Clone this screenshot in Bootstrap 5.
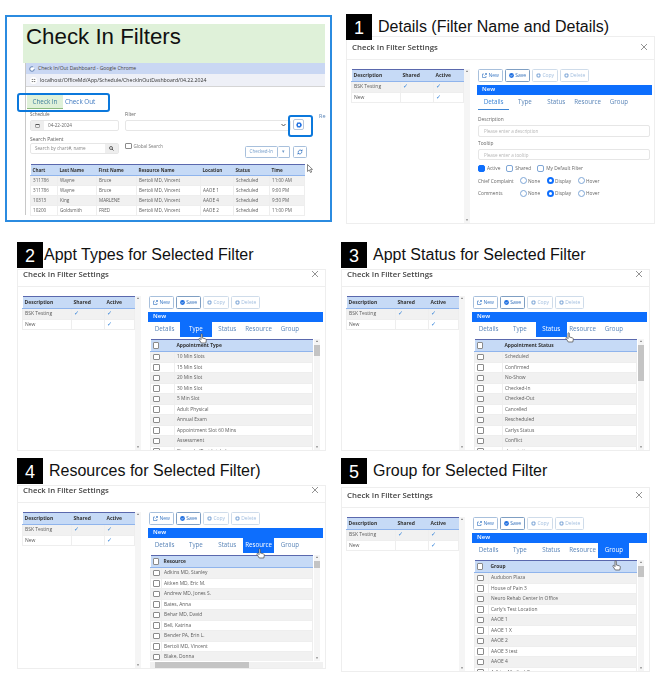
<!DOCTYPE html>
<html lang="en">
<head>
  <meta charset="UTF-8" />
  <meta name="viewport" content="width=device-width, initial-scale=1.0" />
  <title>Check In Filters</title>
  <link href="https://cdn.jsdelivr.net/npm/bootstrap@5.3.0/dist/css/bootstrap.min.css" rel="stylesheet" />
  <style>
    body { background: #fff; margin: 0; overflow: hidden; }
    .sheet { display: grid; grid-template-columns: 340px 315px; grid-template-rows: 236px 219px 234px; width: 655px; height: 689px; }
    .cell { display: flex; flex-direction: column; min-width: 0; min-height: 0; }
    .cell-a { padding: 15px 8px 14px 5px; }
    .cell-b { padding: 14px 0 0 6px; }
    .cell-c { padding: 6px 14px 0 17px; }
    .cell-d { padding: 6px 5px 0 1px; }
    .cell-e { padding: 3px 13px 0 17px; }
    .cell-f { padding: 3px 5px 0 1px; }

    .step-title { display: flex; align-items: center; gap: 6px; font-family: "Liberation Sans", Arial, sans-serif; font-size: 16px; line-height: 26px; color: #111; position: relative; z-index: 2; flex: none; }
    .step-title.tight { gap: 1px; }
    .step-num { width: 26px; height: 26px; background: #000; color: #fff; font-size: 18px; text-align: center; line-height: 28px; flex: none; }

    .shot { font-family: "Open Sans", sans-serif; background: #fff; border: 1px solid #eee; display: flex; flex-direction: column; overflow: hidden; position: relative; filter: blur(.4px); flex: none; }
    .shot-head { border-bottom: 1px solid #eee; display: flex; align-items: flex-end; justify-content: space-between; padding: 0 6px 7px 5px; font-size: 7.8px; line-height: 9px; font-weight: 600; color: #444; flex: none; }
    .shot-x { width: 8px; height: 8px; color: #777; flex: none; margin-bottom: 1px; }
    .shot-body { display: flex; flex: 1; min-height: 0; padding-top: 9px; }
    .left-pane { width: 119px; margin-left: 4px; display: flex; flex: none; }
    .left-pane .tiny-table { width: 112px; }
    .right-pane { width: 175px; margin-left: 7px; display: flex; flex-direction: column; min-height: 0; flex: none; }

    .tiny-table { table-layout: fixed; margin: 0; font-size: 5px; color: #5c5c5c; border-collapse: collapse; height: fit-content; }
    .tiny-table th, .tiny-table td { padding: 0 2px; height: 10.5px; line-height: 9.5px; border: 1px solid #eee; white-space: nowrap; overflow: hidden; background: #fff; box-shadow: none; vertical-align: middle; }
    .tiny-table thead th { height: 12px; background: #c6daf6; color: #333; font-weight: 700; border: 0; border-top: 1px solid #5a68ad; border-bottom: 1px solid #8fb4ec; }
    .tiny-table tbody tr:nth-child(odd) td { background: #f1f1f1; }
    .tiny-tick { color: #2f7fd8; font-size: 6px; line-height: 8px; }

    .side-bar { width: 6px; background: #f5f5f5; display: flex; flex-direction: column; justify-content: space-between; flex: none; position: relative; }
    .side-bar-arrow { font-size: 3px; line-height: 5px; color: #666; text-align: center; }
    .side-thumb { position: absolute; top: 6px; left: 0; width: 100%; background: #c4c4c4; }

    .tool-row { display: flex; gap: 2px; padding-left: 1px; flex: none; }
    .tool-btn { display: flex; align-items: center; justify-content: center; gap: 1.5px; height: 13px; padding: 0; font-size: 5px; color: #3a78c4; background: #fff; border: 1px solid #a8c0dc; border-radius: 1.5px; }
    .tool-btn svg { width: 5px; height: 5px; }
    .tool-btn.is-off { color: #a3bfdf; border-color: #cfdcea; }
    .tool-btn.is-save { border-color: #7f9fc3; color: #2e6cb8; }
    .pane-bar { background: #0d6efd; color: #fff; font-size: 6px; font-weight: 600; line-height: 9.5px; height: 9.5px; padding-left: 5px; margin-top: 3px; flex: none; }
    .tab-row { display: flex; flex-wrap: nowrap; padding-left: 1px; flex: none; height: 15px; }
    .tab-row .nav-link { width: 31.3px; height: 15px; padding: 0; text-align: center; font-size: 6.2px; line-height: 14px; color: #5a85b8; white-space: nowrap; flex: none; }
    .tab-row .nav-link.is-on { background: #0d6efd; color: #fff; }
    .tab-row .nav-link.is-line { color: #3d86d6; border-bottom: 1px solid #3d86d6; }
    .list-wrap { display: flex; flex: 1; min-height: 0; margin: 2.5px 3px 0 2px; gap: 1px; }
    .list-clip { flex: 1; overflow: hidden; min-width: 0; }
    .list-clip .tiny-table { width: 100%; font-size: 4.9px; }
    .tick-box { display: block; width: 6.5px; height: 6.5px; border: 1px solid #8b8b8b; border-radius: 1px; background: #fff; }
    .under-bar { height: 6px; background: #f1f1f1; margin: 1px 0 0 2px; flex: none; position: relative; }
    .under-thumb { position: absolute; left: 5px; top: 0; width: 94px; height: 100%; background: #c4c4c4; }
    .hand { position: absolute; width: 9px; height: 11px; z-index: 3; }

    .form-pane { padding: 6.5px 2px 0 1px; font-size: 4.8px; color: #666; }
    .form-pane label { display: block; line-height: 7px; }
    .thin-input { display: block; height: 11.5px; padding: 0 5px; font-size: 4.5px; line-height: 10px; border: 1px solid #e6e6e6; border-radius: 2px; color: #b5b5b5; margin-bottom: 3px; margin-top: 2px; }
    .tick-row { display: flex; align-items: center; gap: 2px; height: 12.5px; line-height: 10px; }
    .tick-row.first-row { margin-top: -1px; }
    .pick { width: 7px; height: 7px; border: 1px solid #7ea6d6; border-radius: 2px; flex: none; }
    .pick.round { border-radius: 50%; }
    .pick.filled { background: #0d6efd; border-color: #0d6efd; }
    .pick.round.filled { background: #fff; border: 2px solid #0d6efd; }
    .row-name { width: 40px; }
    .pick-opt { display: flex; align-items: center; gap: 1px; width: 25px; }
    .pick-opt.wide { width: 29px; }

    /* first panel, the dashboard shot */
    .dash { border: 2px solid #2b8be0; flex: 1; padding: 7px 5px 0 16px; position: relative; font-family: "Open Sans", sans-serif; overflow: hidden; }
    .dash-title { height: 39px; background: #dff1d9; font-family: "Liberation Sans", Arial, sans-serif; font-size: 22.3px; line-height: 26px; color: #111; padding-left: 3px; }
    .dash-inner { filter: blur(.4px); border-left: 1px solid #c8c8c8; margin-left: 2px; height: 152px; font-size: 5px; color: #5c5c5c; position: relative; }
    .chrome-top { display: flex; align-items: center; gap: 3px; height: 11px; background: #c9d7f3; line-height: 11px; padding-left: 3px; font-size: 5px; color: #444; }
    .chrome-url { display: flex; align-items: center; gap: 3px; height: 13px; background: #eef0f7; line-height: 13px; padding-left: 4px; font-size: 5.2px; color: #333; border-bottom: 1px solid #d5d5d5; }
    .dash-tabs { display: flex; margin-top: 8px; height: 13px; font-size: 6.3px; line-height: 13px; padding-left: 1px; }
    .dash-tabs .nav-link { padding: 0; color: #3d78c0; line-height: 13px; }
    .dash-tabs .is-green { width: 36px; text-align: center; background: #dff1d9; color: #3f7f9c; border-bottom: 1px solid #8dbb7f; }
    .dash-tabs .nav-link + .nav-link { margin-left: 2px; }
    .dash-grid { display: grid; grid-template-columns: 89px 166px 13px; gap: 0 6px; margin: 3px 0 0 4px; }
    .dash-grid label { line-height: 7px; font-size: 4.6px; }
    .dash-field { display: flex; height: 11px; border: 1px solid #e6e6e6; border-radius: 2px; line-height: 9px; font-size: 4.6px; color: #666; align-items: center; margin-top: 1px; }
    .dash-search { width: 89px; margin-top: 1px; }
    .dash-addon { width: 13px; height: 100%; background: #eee; display: flex; align-items: center; justify-content: center; flex: none; }
    .dash-addon svg { width: 5px; height: 5px; }
    .dash-pad { padding-left: 4px; }
    .dash-gear { display: flex; align-items: center; justify-content: center; width: 11px; height: 11px; border: 1px solid #b6c6dc; border-radius: 2px; margin: 8px 0 0 -4px; }
    .dash-gear svg { width: 6px; height: 6px; }
    .dash-line { display: flex; margin: 5px 0 0 4px; height: 27px; position: relative; }
    .dash-global { display: flex; align-items: flex-start; gap: 2px; margin: 7px 0 0 6px; color: #777; line-height: 7px; font-size: 4.6px; }
    .dash-actions { display: flex; gap: 3px; margin-left: auto; margin-right: 18px; margin-top: 10px; height: 12px; }
    .dash-btn { height: 12px; border: 1px solid #a8c0dc; border-radius: 1.5px; display: flex; align-items: center; justify-content: center; color: #6f99c8; font-size: 4.5px; }
    .dash-btn.is-wide { width: 14px; }
    .dash-table { margin: 1px 0 0 4px; width: 274px; font-size: 4.6px; }
    .dash-table thead th { height: 11.5px; }
    .dash-table td, .dash-table th { height: 10px; line-height: 8.5px; }
    .ring { position: absolute; border: 2.5px solid #0b78dc; border-radius: 3px; z-index: 3; }
    .ring-tabs { left: 10px; top: 76px; width: 93px; height: 19px; }
    .ring-gear { left: 281px; top: 98px; width: 25px; height: 22px; }
    .pointer { position: absolute; left: 300px; top: 147px; width: 6px; height: 9px; z-index: 3; }
    .dash-re { position: absolute; left: 312px; top: 96px; font-size: 5.5px; color: #5a85b8; line-height: 7px; }
  </style>
</head>
<body>

  <div class="sheet">
    <div class="cell cell-a">
      <div class="dash">
        <div class="dash-title">Check In Filters</div>
        <div class="dash-inner">
          <div class="chrome-top"><svg width="6" height="6" viewBox="0 0 10 10"><circle cx="5" cy="5" r="3.800" fill="#fff" stroke="#4a6fa5" stroke-width="1.400" stroke-dasharray="18 6"/></svg>Check In/Out Dashboard - Google Chrome</div>
          <div class="chrome-url"><svg width="7" height="7" viewBox="0 0 10 10"><circle cx="5" cy="5" r="5" fill="#fff"/><path d="M2.500 3.500h2M5.500 3.500h2M2.500 6.500h2M5.500 6.500h2" stroke="#444" stroke-width="1"/></svg>localhost/OfficeMd/App/Schedule/CheckInOutDashboard/04.22.2024</div>
          <div class="nav dash-tabs">
            <a class="nav-link is-green" href="#">Check In</a>
            <a class="nav-link" href="#">Check Out</a>
          </div>
          <div class="dash-grid">
            <div>
              <label>Schedule</label>
              <div class="dash-field">
                <span class="dash-addon"><svg viewBox="0 0 10 10"><path d="M1 2h8v7H1z" fill="#555"/><path d="M2 4h6v4H2z" fill="#eee"/></svg></span>
                <span class="dash-pad">04-22-2024</span>
              </div>
            </div>
            <div>
              <label>Filter</label>
              <div class="dash-field justify-content-end pe-1"><svg width="5" height="4" viewBox="0 0 10 8"><path d="M1 2l4 4 4-4" fill="none" stroke="#555" stroke-width="2"/></svg></div>
            </div>
            <div class="dash-gear" id="dashGear"></div>
          </div>
          <div class="dash-line">
            <div>
              <label class="d-block lh-sm">Search Patient</label>
              <div class="dash-field dash-search">
                <span class="dash-pad flex-fill text-black-50">Search by chart#, name</span>
                <span class="dash-addon"><svg viewBox="0 0 10 10"><circle cx="4" cy="4" r="3" fill="none" stroke="#444" stroke-width="1.600"/><path d="M6 6l3 3" stroke="#444" stroke-width="1.800"/></svg></span>
              </div>
            </div>
            <div class="dash-global"><span class="tick-box"></span>Global Search</div>
            <div class="dash-actions">
              <div class="d-flex">
                <span class="dash-btn px-1">Checked-In</span>
                <span class="dash-btn px-1 border-start-0">▾</span>
              </div>
              <span class="dash-btn is-wide" id="dashRefresh"></span>
            </div>
          </div>
          <table class="table tiny-table dash-table" id="dashTable"></table>
        </div>
        <div class="dash-re">Re</div>
        <div class="ring ring-tabs"></div>
        <div class="ring ring-gear"></div>
        <svg class="pointer" viewBox="0 0 6 9"><path d="M.5.5v7l1.800-1.600L3.500 8.500l1.200-.5-1.200-2.600H5.500z" fill="#fff" stroke="#555" stroke-width=".7"/></svg>
      </div>
    </div>
    <div class="cell cell-b" id="step1"></div>
    <div class="cell cell-c" id="step2"></div>
    <div class="cell cell-d" id="step3"></div>
    <div class="cell cell-e" id="step4"></div>
    <div class="cell cell-f" id="step5"></div>
  </div>

  <script src="https://cdn.jsdelivr.net/npm/bootstrap@5.3.0/dist/js/bootstrap.bundle.min.js"></script>
  <script>
    const gear = c => `<svg viewBox="0 0 10 10"><circle cx="5" cy="5" r="3" fill="none" stroke="${c}" stroke-width="2.200"/><circle cx="5" cy="5" r="4.400" fill="none" stroke="${c}" stroke-width="1.200" stroke-dasharray="1.600 1.200"/></svg>`;
    const icons = {
      New: c => `<svg viewBox="0 0 10 10"><path d="M4 2H1v7h7V6" fill="none" stroke="${c}" stroke-width="1.300"/><path d="M5 5l4-4M6 1h3v3" fill="none" stroke="${c}" stroke-width="1.300"/></svg>`,
      Save: c => `<svg viewBox="0 0 10 10"><circle cx="5" cy="5" r="4.800" fill="${c}"/><path d="M2.800 5l1.600 1.600 2.800-3" fill="none" stroke="#fff" stroke-width="1.300"/></svg>`,
      Copy: gear,
      Delete: gear
    };
    const buttons = [["New", 25, ""], ["Save", 25, "is-save"], ["Copy", 26, "is-off"], ["Delete", 29, "is-off"]];
    const tabs = ["Details", "Type", "Status", "Resource", "Group"];
    const tick = '<span class="tiny-tick">✓</span>';

    document.getElementById("dashGear").innerHTML = gear("#1f6fe0");
    document.getElementById("dashRefresh").innerHTML = `<svg width="6" height="6" viewBox="0 0 10 10"><path d="M2 6a3.500 3.500 0 0 1 6-3M8 4a3.500 3.500 0 0 1-6 3" fill="none" stroke="#3a78c4" stroke-width="1.500"/><path d="M9 .5v3H6M1 9.500v-3h3" fill="#3a78c4"/></svg>`;

    const dashCols = [27, 39, 40, 64, 33, 36, 35];
    const dashHead = ["Chart", "Last Name", "First Name", "Resource Name", "Location", "Status", "Time"];
    const dashRows = [
      ["311786", "Wayne", "Bruce", "Bertoli MD, Vincent", "", "Scheduled", "11:00 AM"],
      ["311786", "Wayne", "Bruce", "Bertoli MD, Vincent", "AAOE 1", "Scheduled", "9:00 PM"],
      ["10313", "King", "MARLENE", "Bertoli MD, Vincent", "AAOE 4", "Scheduled", "9:30 PM"],
      ["10200", "Goldsmith", "FRED", "Bertoli MD, Vincent", "AAOE 2", "Scheduled", "11:00 PM"]
    ];
    document.getElementById("dashTable").innerHTML =
      `<colgroup>${dashCols.map(w => `<col width="${w}">`).join("")}</colgroup>` +
      `<thead><tr>${dashHead.map(h => `<th>${h}</th>`).join("")}</tr></thead>` +
      `<tbody>${dashRows.map(r => `<tr>${r.map(v => `<td>${v}</td>`).join("")}</tr>`).join("")}</tbody>`;

    function listPane(p) {
      const rows = p.rows.map(r => `<tr><td><span class="tick-box"></span></td><td>${r}</td></tr>`).join("");
      const under = p.under ? '<div class="under-bar"><div class="under-thumb"></div></div>' : "";
      return `<div class="list-wrap">
          <div class="list-clip"><table class="table tiny-table">
            <colgroup><col width="${p.check}"><col></colgroup>
            <thead><tr><th><span class="tick-box"></span></th><th>${p.label}</th></tr></thead>
            <tbody>${rows}</tbody></table></div>
          <div class="side-bar"><div class="side-bar-arrow">▲</div><div class="side-thumb" style="height:${p.thumb}px"></div><div class="side-bar-arrow">▼</div></div>
        </div>${under}`;
    }

    function detailsPane() {
      const picks = () => ["None", "Display", "Hover"].map(o =>
        `<span class="pick-opt ${o === "Display" ? "wide" : ""}"><span class="pick round ${o === "Display" ? "filled" : ""}"></span>${o}</span>`).join("");
      return `<div class="form-pane">
          <label>Description</label>
          <span class="thin-input">Please enter a description</span>
          <label>Tooltip</label>
          <span class="thin-input">Please enter a tooltip</span>
          <div class="tick-row first-row"><span class="pick filled"></span>Active <span class="pick ms-1"></span>Shared <span class="pick ms-1"></span>My Default Filter</div>
          <div class="tick-row"><span class="row-name">Chief Complaint</span>${picks()}</div>
          <div class="tick-row"><span class="row-name">Comments</span>${picks()}</div>
        </div>`;
    }

    function renderStep(p) {
      const tools = buttons.map(([n, w, cls]) =>
        `<button type="button" class="btn tool-btn ${cls}" style="width:${w}px">${icons[n](cls === "is-off" ? "#8fb2dc" : n === "Save" ? "#1f6fe0" : "#3a78c4")}${n}</button>`).join("");
      const navs = tabs.map((t, i) =>
        `<a class="nav-link ${i === p.active ? (p.details ? "is-line" : "is-on") : ""}" href="#">${t}</a>`).join("");
      const hand = p.hand ? `<svg class="hand" style="left:${p.hand[0]}px;top:${p.hand[1]}px" viewBox="0 0 9 11"><path d="M3 1.500c0-1 1.300-1 1.300 0V5l3 .8c.8.300 1.200.8 1 1.700L7.800 10H3.300L1 6.500c-.5-.9.500-1.500 1.200-.8l.8.900z" fill="#fff" stroke="#444" stroke-width=".7"/></svg>` : "";
      document.getElementById(p.id).innerHTML = `
        <div class="step-title ${p.tight ? "tight" : ""}"><span class="step-num">${p.num}</span><span>${p.title}</span></div>
        <div class="shot" style="height:${p.height}px;width:309px;margin-top:${p.gap}px">
          <div class="shot-head" style="height:${p.head}px"><span>Check In Filter Settings</span>
            <svg class="shot-x" viewBox="0 0 8 8"><path d="M1 1l6 6M7 1L1 7" stroke="currentColor" stroke-width=".8"/></svg></div>
          <div class="shot-body">
            <div class="left-pane">
              <table class="table tiny-table">
                <colgroup><col width="49"><col width="33"><col width="30"></colgroup>
                <thead><tr><th>Description</th><th>Shared</th><th>Active</th></tr></thead>
                <tbody><tr><td>BSK Testing</td><td>${tick}</td><td>${tick}</td></tr>
                <tr><td>New</td><td></td><td>${tick}</td></tr></tbody>
              </table>
              <div class="side-bar"><div class="side-bar-arrow">▲</div><div class="side-bar-arrow">▼</div></div>
            </div>
            <div class="right-pane">
              <div class="tool-row">${tools}</div>
              <div class="pane-bar">New</div>
              <div class="nav tab-row">${navs}</div>
              ${p.details ? detailsPane() : listPane(p)}
            </div>
          </div>
          ${hand}
        </div>`;
    }

    const steps = [
      { id: "step1", num: 1, title: "Details (Filter Name and Details)", height: 188, gap: -4, head: 23, active: 0, details: true },
      { id: "step2", num: 2, title: "Appt Types for Selected Filter", tight: true, height: 182, gap: 1, head: 17, active: 1,
        label: "Appointment Type", check: 24, thumb: 11, hand: [180, 63],
        rows: ["10 Min Slots", "15 Min Slot", "20 Min Slot", "30 Min Slot", "5 Min Slot", "Adult Physical", "Annual Exam", "Appointment Slot 60 Mins", "Assessment", "Biopsy (w/Test Intake)"] },
      { id: "step3", num: 3, title: "Appt Status for Selected Filter", height: 182, gap: 1, head: 17, active: 2,
        label: "Appointment Status", check: 28, thumb: 36, hand: [223, 62],
        rows: ["Scheduled", "Confirmed", "No-Show", "Checked-In", "Checked-Out", "Cancelled", "Rescheduled", "Carlys Status", "Conflict", "description"] },
      { id: "step4", num: 4, title: "Resources for Selected Filter)", height: 184, gap: 1, head: 17, active: 3,
        label: "Resource", check: 11, thumb: 7, under: true, hand: [238, 62],
        rows: ["Adkins MD, Stanley", "Aitken MD, Eric M.", "Andrew MD, Jones S.", "Bates, Anna", "Behar MD, David", "Bell, Katrina", "Bender PA, Erin L.", "Bertoli MD, Vincent", "Blake, Donna"] },
      { id: "step5", num: 5, title: "Group for Selected Filter", height: 185, gap: 3, head: 20, active: 4,
        label: "Group", check: 14, thumb: 11, hand: [270, 72],
        rows: ["Audubon Plaza", "House of Pain 3", "Neuro Rehab Center In Office", "Carly's Test Location", "AAOE 1", "AAOE 1 X", "AAOE 2", "AAOE 3 test", "AAOE 4", "Adkins Medical Group"] }
    ];
    steps.forEach(renderStep);
  </script>

</body>
</html>
